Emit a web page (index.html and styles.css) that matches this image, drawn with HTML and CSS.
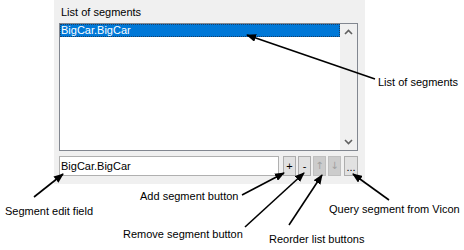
FILE: index.html
```html
<!DOCTYPE html>
<html lang="en">
<head>
    <meta charset="UTF-8">
    <title>List of segments</title>
    <link rel="stylesheet" href="styles.css">
</head>
<body>
    <div class="page">
        <!-- Segment panel -->
        <div class="panel">
            <div class="panel-title">List of segments</div>
            <div class="listbox">
                <ul class="items">
                    <li class="item selected">BigCar.BigCar</li>
                </ul>
                <div class="scrollbar">
                    <svg class="chev" width="17" height="17" viewBox="0 0 17 17"><polyline points="5,10 8.5,6.5 12,10" fill="none" stroke="#606060" stroke-width="1.6"/></svg>
                    <svg class="chev" width="17" height="17" viewBox="0 0 17 17"><polyline points="5,7 8.5,10.5 12,7" fill="none" stroke="#606060" stroke-width="1.6"/></svg>
                </div>
            </div>
            <div class="edit-row">
                <div class="edit">BigCar.BigCar</div>
                <button class="btn add">+</button>
                <button class="btn">-</button>
                <button class="btn off">&#8593;</button>
                <button class="btn off">&#8595;</button>
                <button class="btn query">...</button>
            </div>
        </div>

        <!-- Callouts -->
        <svg class="arrows" width="464" height="250" viewBox="0 0 464 250">
            <defs>
                <marker id="head" markerWidth="10" markerHeight="8" refX="9" refY="4" orient="auto" markerUnits="userSpaceOnUse">
                    <polygon points="0,0 10,4 0,8" fill="#000"/>
                </marker>
            </defs>
            <g stroke="#000" stroke-width="1.6" marker-end="url(#head)">
                <line x1="375" y1="79" x2="247" y2="35"/>
                <line x1="34" y1="197" x2="63" y2="174"/>
                <line x1="242" y1="195" x2="284" y2="173"/>
                <line x1="245" y1="227" x2="304" y2="173"/>
                <line x1="289" y1="225" x2="322" y2="175"/>
                <line x1="389" y1="200" x2="353" y2="174"/>
            </g>
        </svg>
        <div class="note n-list">List of segments</div>
        <div class="note n-edit">Segment edit field</div>
        <div class="note n-add">Add segment button</div>
        <div class="note n-remove">Remove segment button</div>
        <div class="note n-order">Reorder list buttons</div>
        <div class="note n-query">Query segment from Vicon</div>
    </div>
</body>
</html>
```
FILE: styles.css
```css
body {
    margin: 0;
    background-color: #ffffff;
    font-family: "Liberation Sans", Arial, sans-serif;
    font-size: 11px;
    color: #000;
}

.page {
    position: relative;
    width: 464px;
    height: 250px;
    overflow: hidden;
}

/* Panel */
.panel {
    margin-left: 54px;
    width: 311px;
    height: 184px;
    box-sizing: border-box;
    padding: 5px 7px 0 5px;
    background-color: #f0f0f0;
}

.panel-title {
    height: 18px;
    line-height: 14px;
    padding-left: 2px;
}

.listbox {
    display: flex;
    height: 128px;
    box-sizing: border-box;
    border: 1px solid #828790;
    background-color: #fff;
}

.items {
    flex: 1;
    list-style: none;
    margin: 0;
    padding: 0;
}

.item {
    height: 13px;
    line-height: 13px;
    padding-left: 1px;
}

.item.selected {
    background-color: #0078d7;
    color: #fff;
    outline: 1px dotted #1a3f66;
    outline-offset: -1px;
}

.scrollbar {
    width: 17px;
    display: flex;
    flex-direction: column;
    justify-content: space-between;
    background-color: #f0f0f0;
}

.chev {
    display: block;
}

/* Edit row */
.edit-row {
    display: flex;
    margin-top: 5px;
    height: 20px;
}

.edit {
    width: 220px;
    box-sizing: border-box;
    border: 1px solid #b0b0b0;
    background-color: #fff;
    line-height: 18px;
    padding-left: 1px;
    margin-right: 4px;
}

.btn {
    width: 13px;
    height: 20px;
    margin: 0 2px 0 0;
    padding: 0;
    border: 1px solid #adadad;
    background-color: #e1e1e1;
    font-family: "Liberation Sans", Arial, sans-serif;
    font-size: 11px;
    color: #000;
    line-height: 16px;
}

.btn.off {
    background-color: #cccccc;
    border-color: #bfbfbf;
    color: #a0a0a0;
    font-family: "DejaVu Sans", sans-serif;
    font-size: 10px;
}

.btn.query {
    width: 14px;
    margin: 0 0 0 1px;
    line-height: 20px;
}

/* Callouts */
.arrows {
    position: absolute;
    left: 0;
    top: 0;
}

.note {
    position: absolute;
    white-space: nowrap;
    line-height: 13px;
}

.n-list { left: 378px; top: 76px; }
.n-edit { left: 5px; top: 205px; }
.n-add { left: 140px; top: 190px; }
.n-remove { left: 123px; top: 228px; }
.n-order { left: 269px; top: 233px; }
.n-query { left: 329px; top: 203px; }
```
